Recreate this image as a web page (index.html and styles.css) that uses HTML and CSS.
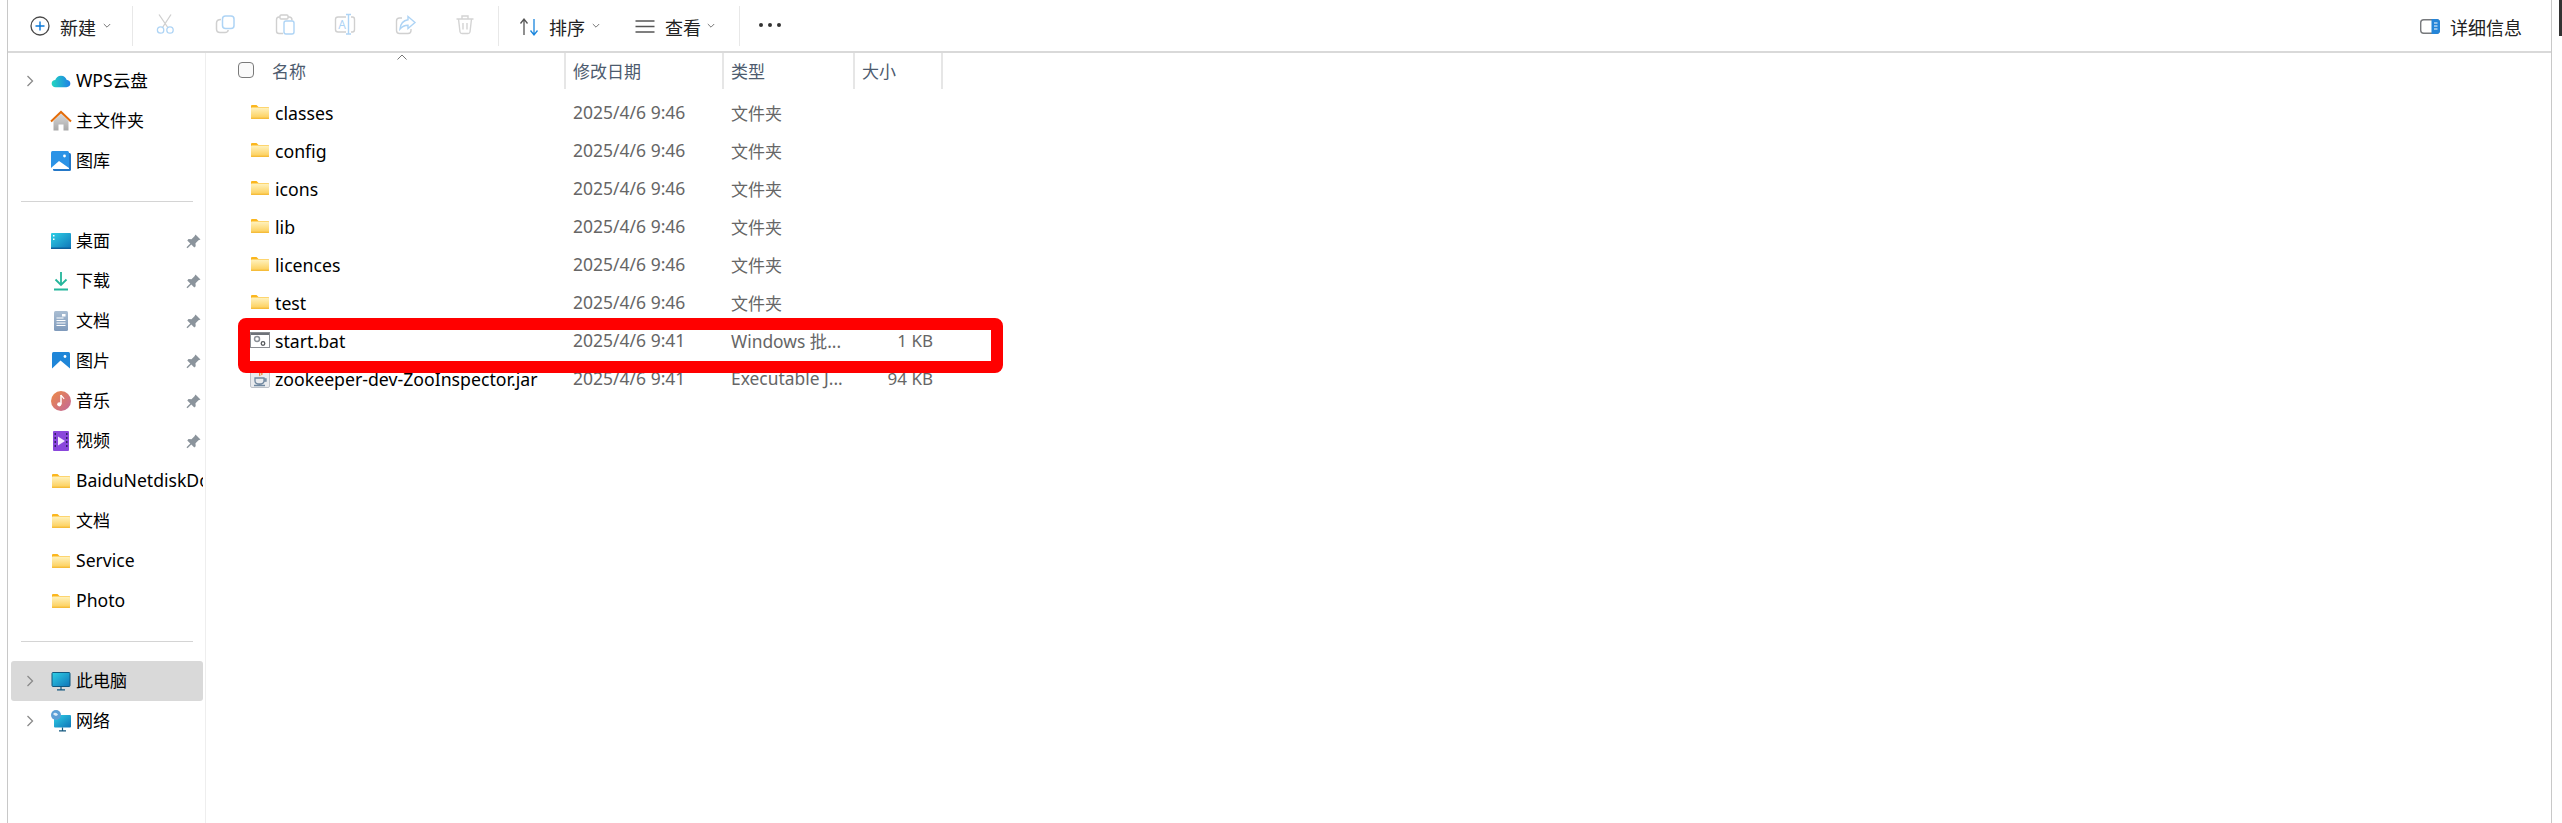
FILE: index.html
```html
<!DOCTYPE html>
<html lang="zh-CN">
<head>
<meta charset="utf-8">
<title>文件资源管理器</title>
<link rel="stylesheet" href="styles.css">
</head>
<body>
<svg class="defs" width="0" height="0" aria-hidden="true">
  <defs>
    <linearGradient id="fg" x1="0" y1="0" x2="0" y2="1"><stop offset="0" stop-color="#fff3c0"/><stop offset=".8" stop-color="#fdd468"/><stop offset="1" stop-color="#f3b62e"/></linearGradient>
    <linearGradient id="cloud" x1="0" y1="0" x2="1" y2="0"><stop offset="0" stop-color="#22d6c0"/><stop offset="1" stop-color="#1f7fe6"/></linearGradient>
    <linearGradient id="blue" x1="0" y1="0" x2="0" y2="1"><stop offset="0" stop-color="#2f9be6"/><stop offset="1" stop-color="#0f62b8"/></linearGradient>
    <linearGradient id="teal" x1="0" y1="0" x2="1" y2="1"><stop offset="0" stop-color="#2fd0e6"/><stop offset="1" stop-color="#0f74b8"/></linearGradient>
    <linearGradient id="doc" x1="0" y1="0" x2="0" y2="1"><stop offset="0" stop-color="#a9bdd2"/><stop offset="1" stop-color="#7f9abb"/></linearGradient>
    <linearGradient id="music" x1="0" y1="0" x2="1" y2="1"><stop offset="0" stop-color="#ee8a46"/><stop offset="1" stop-color="#c2679b"/></linearGradient>
    <linearGradient id="roof" x1="0" y1="0" x2="0" y2="1"><stop offset="0" stop-color="#d9d9d9"/><stop offset="1" stop-color="#a8a8a8"/></linearGradient>
    <symbol id="folder" viewBox="0 0 18 14"><path d="M0 1a1 1 0 0 1 1-1h4.500l2 2H17a1 1 0 0 1 1 1v10a1 1 0 0 1-1 1H1a1 1 0 0 1-1-1z" fill="#fbb61d"/><rect y="2.500" width="18" height="11.500" rx=".8" fill="url(#fg)"/></symbol>
    <symbol id="pin" viewBox="0 0 20 20"><path d="M11.500 3.500l5 5-2 .8-3 3 .2 3-1.400 1.200-3-3-3.800 3.800-1-1 3.800-3.800-3-3 1.200-1.400 3 .2 3-3z" fill="#8b949c"/></symbol>
    <symbol id="chev" viewBox="0 0 8 12"><path d="M1.500 1l5 5-5 5" fill="none" stroke="#8a8a8a" stroke-width="1.300"/></symbol>
    <symbol id="down" viewBox="0 0 8 6"><path d="M.8 1l3.200 3.200L7.200 1" fill="none" stroke="#777" stroke-width="1"/></symbol>
  </defs>
</svg>
<span class="edge"></span>
<div class="window">
  <header class="toolbar">
    <svg class="ticon new-icon" viewBox="0 0 24 24"><circle cx="12" cy="12" r="9" fill="none" stroke="#4a4a4a" stroke-width="1.300"/><path d="M12 7.500v9M7.500 12h9" stroke="#0a78d7" stroke-width="1.400"/></svg>
    <span class="tlabel">新建</span>
    <svg class="tdown" viewBox="0 0 8 6"><use href="#down"/></svg>
    <span class="tsep sep-new"></span>
    <div class="tgroup">
      <span class="tbtn"><svg class="ticon" viewBox="0 0 24 24" fill="none" stroke-width="1.300"><path d="M9.500 14.500L18 1.500M14.800 14.500L6 1.500" stroke="#cfcfcf"/><circle cx="7.600" cy="17" r="3.200" stroke="#aed4f5"/><circle cx="17" cy="17" r="3.200" stroke="#aed4f5"/></svg></span>
      <span class="tbtn"><svg class="ticon" viewBox="0 0 24 24" fill="none" stroke-width="1.500"><path d="M8 6.500C5 6.500 3.500 8 3.500 10v6c0 2.500 1.500 3.500 3.500 3.500h5c2 0 3-1 3.200-2.500" stroke="#d0d0d0"/><rect x="9.500" y="3" width="11.500" height="12.500" rx="3" stroke="#aed4f5"/></svg></span>
      <span class="tbtn"><svg class="ticon" viewBox="0 0 24 24" fill="none" stroke-width="1.400"><path d="M7 4H6C4.500 4 3.500 5 3.500 7v11c0 1.500 1 2.500 2.500 2.500h4M15 4h1c1.500 0 3 1 3 3v.5" stroke="#d0d0d0"/><rect x="7" y="2" width="8" height="4" rx="1" stroke="#d0d0d0"/><rect x="11" y="8" width="10" height="13" rx="2" stroke="#aed4f5"/></svg></span>
      <span class="tbtn"><svg class="ticon" viewBox="0 0 24 24" fill="none" stroke-width="1.400"><path d="M13 4H5C3.500 4 2.500 5 2.500 6.500v10C2.500 18 3.500 19 5 19h8M18 4h1.500c1.200 0 2 1 2 2.500v10c0 1.500-.8 2.500-2 2.500H18" stroke="#d0d0d0"/><path d="M15.500 1.500v19.500M13 1.500h5M13 21h5" stroke="#aed4f5"/><text class="rename-a" x="9" y="16" text-anchor="middle">A</text></svg></span>
      <span class="tbtn"><svg class="ticon" viewBox="0 0 24 24" fill="none" stroke-width="1.400"><path d="M9 5H6.500C4.500 5 3.500 6 3.500 8v9.500c0 2 1 3 3 3H15c2 0 3-1 3-3V16" stroke="#d0d0d0"/><path d="M15 3.500l7 6-7 6v-3.300c-3.500 0-6 1.300-8 3.800.5-5 3.500-8.500 8-9.200z" stroke="#aed4f5"/></svg></span>
      <span class="tbtn"><svg class="ticon" viewBox="0 0 24 24" fill="none" stroke="#d4d4d4" stroke-width="1.400"><path d="M3.500 6h17M9 6V3h6v3M5.500 6L7 19c.2 1.200 1 1.500 2 1.500h6c1 0 1.800-.3 2-1.500l1.500-13M10 10v6.500M14 10v6.500"/></svg></span>
    </div>
    <span class="tsep sep-edit"></span>
    <svg class="ticon sort-icon" viewBox="0 0 24 24" fill="none" stroke-width="1.300"><path d="M7 20V4M3.500 8.500L7 4l3.500 4.500" stroke="#555"/><path d="M17 4v16M13.500 15.500L17 20l3.500-4.500" stroke="#1a86dd"/></svg>
    <span class="tlabel">排序</span>
    <svg class="tdown" viewBox="0 0 8 6"><use href="#down"/></svg>
    <svg class="ticon list-icon" viewBox="0 0 24 24" stroke="#555" stroke-width="1.500"><path d="M2.500 6h19M2.500 11.500h19M2.500 17h19"/></svg>
    <span class="tlabel">查看</span>
    <svg class="tdown last-down" viewBox="0 0 8 6"><use href="#down"/></svg>
    <span class="tsep sep-view"></span>
    <svg class="ticon more-icon" viewBox="0 0 24 24" fill="#333"><circle cx="3" cy="11" r="2"/><circle cx="12" cy="11" r="2"/><circle cx="21" cy="11" r="2"/></svg>
    <div class="details">
      <svg class="ticon" viewBox="0 0 24 24"><rect x="2.700" y="5.700" width="18.600" height="13.600" rx="3" fill="#fff" stroke="#77797c" stroke-width="1.400"/><path d="M13.500 5h5c2.500 0 3.500 1.500 3.500 3.500v8c0 2-1 3.500-3.500 3.500h-5z" fill="#2585d8"/><path d="M16 9h3.500M16 12h3.500M16 15h3.500" stroke="#fff" stroke-width="1"/></svg>
      <span class="tlabel">详细信息</span>
    </div>
  </header>

  <div class="body">
    <nav class="sidebar">
      <div class="navrow"><svg class="chev" viewBox="0 0 8 12"><use href="#chev"/></svg><svg class="nicon" viewBox="-1.500 -1.500 27 27"><path d="M6 19c-3 0-4.500-2-4.500-4.200S3.300 11 5.500 11c.8-3 3.300-5 6.500-5 3.500 0 5.500 2 6.300 4.700 2.500.2 4.200 2 4.200 4.200S21 19 18 19z" fill="url(#cloud)"/></svg><span class="nlabel latin">WPS云盘</span></div>
      <div class="navrow"><span class="chev"></span><svg class="nicon" viewBox="0 0 24 24"><path d="M4.500 12L12 4.500 19.500 12v9.500h-5v-6h-5v6h-5z" fill="url(#roof)"/><path d="M2 12.500L12 3l10 9.500" fill="none" stroke="#e36c0a" stroke-width="2"/></svg><span class="nlabel">主文件夹</span></div>
      <div class="navrow"><span class="chev"></span><svg class="nicon" viewBox="0 0 24 24"><rect x="4" y="4" width="18" height="18" rx="1.500" fill="#2478c8"/><rect x="2" y="2" width="18" height="18" rx="1.500" fill="#2c93e6"/><path d="M2 19l8-7 10 7v1H2z" fill="#fff"/><circle cx="15.500" cy="7" r="1.400" fill="#fff"/></svg><span class="nlabel">图库</span></div>
      <div class="navsep"></div>
      <div class="navrow"><span class="chev"></span><svg class="nicon" viewBox="0 0 24 24"><rect x="2" y="4" width="20" height="16" rx="1" fill="url(#teal)"/><rect x="4" y="6" width="1.500" height="1.500" fill="#fff"/><rect x="4" y="9.500" width="1.500" height="1.500" fill="#fff"/><path d="M2 18.500h20V20H2z" fill="#0d5f9b"/></svg><span class="nlabel">桌面</span><svg class="pin" viewBox="0 0 20 20"><use href="#pin"/></svg></div>
      <div class="navrow"><span class="chev"></span><svg class="nicon" viewBox="0 0 24 24" fill="none" stroke="#23b59b" stroke-width="1.800"><path d="M12 3v13M6.500 10.500L12 16l5.500-5.500M5 20.500h14"/></svg><span class="nlabel">下载</span><svg class="pin" viewBox="0 0 20 20"><use href="#pin"/></svg></div>
      <div class="navrow"><span class="chev"></span><svg class="nicon" viewBox="0 0 24 24"><rect x="5" y="2" width="14" height="20" rx="1.500" fill="url(#doc)"/><path d="M7.500 9h7M7.500 11.500h9M7.500 14h9M7.500 16.500h9" stroke="#fff" stroke-width="1"/><rect x="13" y="5" width="3.500" height="2.500" fill="#fff"/></svg><span class="nlabel">文档</span><svg class="pin" viewBox="0 0 20 20"><use href="#pin"/></svg></div>
      <div class="navrow"><span class="chev"></span><svg class="nicon" viewBox="0 0 24 24"><rect x="3" y="3" width="18" height="18" rx="1.500" fill="#1f86d8"/><path d="M3 19.500l8.500-8 9.500 8V21H3z" fill="#fff"/><circle cx="16" cy="7.500" r="1.400" fill="#fff"/></svg><span class="nlabel">图片</span><svg class="pin" viewBox="0 0 20 20"><use href="#pin"/></svg></div>
      <div class="navrow"><span class="chev"></span><svg class="nicon" viewBox="0 0 24 24"><circle cx="12" cy="12" r="10" fill="url(#music)"/><path d="M12 6v9" stroke="#fff" stroke-width="1.500"/><path d="M12 6c.5 2 2.500 2 3 4" fill="none" stroke="#fff" stroke-width="1.200"/><circle cx="10.300" cy="15.300" r="2.100" fill="#fff"/></svg><span class="nlabel">音乐</span><svg class="pin" viewBox="0 0 20 20"><use href="#pin"/></svg></div>
      <div class="navrow"><span class="chev"></span><svg class="nicon" viewBox="0 0 24 24"><rect x="4" y="2" width="16" height="20" rx="1" fill="#8a47dc"/><path d="M5.500 4h1.500v2H5.500zM5.500 8h1.500v2H5.500zM5.500 12h1.500v2H5.500zM5.500 16h1.500v2H5.500zM17 4h1.500v2H17zM17 8h1.500v2H17zM17 12h1.500v2H17zM17 16h1.500v2H17z" fill="#34206b"/><path d="M9 7.500l7 4.500-7 4.500z" fill="#f3eaff"/></svg><span class="nlabel">视频</span><svg class="pin" viewBox="0 0 20 20"><use href="#pin"/></svg></div>
      <div class="navrow"><span class="chev"></span><span class="nicon folder-box"><svg class="folder" viewBox="0 0 18 14"><use href="#folder"/></svg></span><span class="nlabel latin">BaiduNetdiskDownload</span></div>
      <div class="navrow"><span class="chev"></span><span class="nicon folder-box"><svg class="folder" viewBox="0 0 18 14"><use href="#folder"/></svg></span><span class="nlabel">文档</span></div>
      <div class="navrow"><span class="chev"></span><span class="nicon folder-box"><svg class="folder" viewBox="0 0 18 14"><use href="#folder"/></svg></span><span class="nlabel latin">Service</span></div>
      <div class="navrow"><span class="chev"></span><span class="nicon folder-box"><svg class="folder" viewBox="0 0 18 14"><use href="#folder"/></svg></span><span class="nlabel latin">Photo</span></div>
      <div class="navsep"></div>
      <div class="navrow selected"><svg class="chev" viewBox="0 0 8 12"><use href="#chev"/></svg><svg class="nicon" viewBox="0 0 24 24"><rect x="3" y="3.500" width="18" height="14" rx="1" fill="url(#teal)" stroke="#11577f" stroke-width="1"/><path d="M12 18v2.500M8 20.800h8" stroke="#11577f" stroke-width="1.200"/></svg><span class="nlabel">此电脑</span></div>
      <div class="navrow"><svg class="chev" viewBox="0 0 8 12"><use href="#chev"/></svg><svg class="nicon" viewBox="0 0 24 24"><rect x="5" y="6" width="17" height="12.500" rx="1" fill="url(#teal)"/><path d="M13.500 18.500v3M10 21.800h7" stroke="#11577f" stroke-width="1.200"/><circle cx="7" cy="6" r="5" fill="#5d9fd6"/><path d="M4 5c2-2.500 4-1 5 .5-1 1.500-3 2-5-.5z" fill="#dcebf7"/></svg><span class="nlabel">网络</span></div>
    </nav>

    <main class="main">
      <div class="grid head">
        <div class="hcell name-head"><span class="check"></span><span class="hname">名称</span></div>
        <div class="hcell">修改日期</div>
        <div class="hcell">类型</div>
        <div class="hcell">大小</div>
      </div>
      <svg class="sort-caret" viewBox="0 0 10 6"><path d="M.5 5.500L5 1l4.500 4.500" fill="none" stroke="#777" stroke-width="1"/></svg>

      <div class="files">
        <div class="grid row"><div class="name"><svg class="folder" viewBox="0 0 18 14"><use href="#folder"/></svg><span>classes</span></div><div class="meta date">2025/4/6 9:46</div><div class="meta">文件夹</div><div class="meta size"></div></div>
        <div class="grid row"><div class="name"><svg class="folder" viewBox="0 0 18 14"><use href="#folder"/></svg><span>config</span></div><div class="meta date">2025/4/6 9:46</div><div class="meta">文件夹</div><div class="meta size"></div></div>
        <div class="grid row"><div class="name"><svg class="folder" viewBox="0 0 18 14"><use href="#folder"/></svg><span>icons</span></div><div class="meta date">2025/4/6 9:46</div><div class="meta">文件夹</div><div class="meta size"></div></div>
        <div class="grid row"><div class="name"><svg class="folder" viewBox="0 0 18 14"><use href="#folder"/></svg><span>lib</span></div><div class="meta date">2025/4/6 9:46</div><div class="meta">文件夹</div><div class="meta size"></div></div>
        <div class="grid row"><div class="name"><svg class="folder" viewBox="0 0 18 14"><use href="#folder"/></svg><span>licences</span></div><div class="meta date">2025/4/6 9:46</div><div class="meta">文件夹</div><div class="meta size"></div></div>
        <div class="grid row"><div class="name"><svg class="folder" viewBox="0 0 18 14"><use href="#folder"/></svg><span>test</span></div><div class="meta date">2025/4/6 9:46</div><div class="meta">文件夹</div><div class="meta size"></div></div>
        <div class="grid row"><div class="name"><svg class="ficon" viewBox="0 0 20 20"><rect x=".5" y="2.500" width="19" height="15" fill="#fff" stroke="#8a8d92"/><rect x="1" y="3" width="18" height="2" fill="#6e7278"/><circle cx="7" cy="9" r="2.500" fill="none" stroke="#8b9097" stroke-width="1.500"/><circle cx="13" cy="13.500" r="1.800" fill="none" stroke="#55585c" stroke-width="1.300"/></svg><span>start.bat</span></div><div class="meta date">2025/4/6 9:41</div><div class="meta latin">Windows 批...</div><div class="meta size">1 KB</div></div>
        <div class="grid row"><div class="name"><svg class="ficon" viewBox="0 0 20 20"><rect x=".5" y=".5" width="19" height="19" rx="1.500" fill="#e9ebee" stroke="#bcc1c8"/><path d="M10 2c2 2-2 3 0 6M12 3c1 2-1 2 0 4" fill="none" stroke="#e67824" stroke-width="1.200"/><path d="M5 10h9v3c0 2-2 3-4.500 3S5 15 5 13zM14 11h2v2h-2M4 17.500h11" fill="none" stroke="#6f879f" stroke-width="1.300"/></svg><span>zookeeper-dev-ZooInspector.jar</span></div><div class="meta date">2025/4/6 9:41</div><div class="meta latin">Executable J...</div><div class="meta size">94 KB</div></div>
      </div>
      <div class="callout"></div>
    </main>
  </div>
</div>
</body>
</html>
```

FILE: styles.css
```css
* { box-sizing: border-box; }
html, body { margin: 0; padding: 0; height: 823px; overflow: hidden; background: #fff; }
body {
  font-family: "Noto Sans", "Noto Sans CJK SC", sans-serif;
  font-size: 17px;
  color: #000;
  position: relative;
}
.defs { position: absolute; }
.edge { position: absolute; top: 0; right: 0; width: 3px; height: 36px; background: #333; }
.window {
  margin-left: 7px;
  width: 2545px;
  height: 823px;
  border-left: 1px solid #c8c8c8;
  border-right: 1px solid #c8c8c8;
  display: flex;
  flex-direction: column;
}

/* toolbar */
.toolbar {
  height: 53px;
  flex: none;
  border-bottom: 2px solid #d9d9d9;
  display: flex;
  align-items: center;
}
.ticon { width: 24px; height: 24px; flex: none; display: block; }
.tlabel {
  font-family: "Noto Sans CJK SC", sans-serif;
  font-size: 18px;
  line-height: 24px;
  color: #222;
  margin-left: 8px;
  margin-top: 3px;
  white-space: nowrap;
}
.tdown { width: 8px; height: 6px; margin-left: 7px; flex: none; }
.tsep { width: 1px; height: 40px; background: #e8e8e8; flex: none; }
.new-icon { margin-left: 20px; }
.sep-new { margin-left: 21px; }
.tgroup { display: flex; margin-left: 2px; }
.tbtn { width: 60px; display: flex; justify-content: center; margin-top: -2px; }
.sep-edit { margin-left: 3px; }
.sort-icon { margin-left: 18px; margin-top: 3px; }
.list-icon { margin-left: 33px; margin-top: 3px; }
.last-down { margin-left: 6px; }
.sep-view { margin-left: 24px; }
.more-icon { margin-left: 18px; }
.rename-a { font-family: "Noto Sans", sans-serif; font-size: 12px; fill: #aed4f5; stroke: none; }
.details { margin-left: auto; padding-right: 29px; display: flex; align-items: center; }

/* body */
.body { flex: 1; display: flex; min-height: 0; }

/* sidebar */
.sidebar {
  width: 198px;
  flex: none;
  border-right: 1px solid #eeeeee;
  padding-top: 8px;
}
.navrow {
  width: 192px;
  height: 40px;
  margin-left: 3px;
  padding-left: 15px;
  display: flex;
  align-items: center;
  border-radius: 3px;
}
.selected { background: #d9d9d9; }
.chev { width: 8px; height: 12px; flex: none; display: block; }
.nicon { width: 24px; height: 24px; margin-left: 15px; flex: none; display: flex; align-items: center; justify-content: center; }
.nlabel { margin-left: 3px; margin-bottom: 3px; flex: 1; min-width: 0; overflow: hidden; white-space: nowrap; }
.nlabel.latin { font-size: 17.6px; }
.pin { width: 20px; height: 20px; flex: none; margin-right: -1px; }
.navsep { width: 172px; height: 1px; margin: 20px 0 19px 13px; background: #d4d4d4; }
.folder { width: 18px; height: 14px; flex: none; display: block; }

/* file list */
.main { flex: 1; position: relative; min-width: 0; }
.grid { display: grid; grid-template-columns: 360px 158px 131px 88px; }
.head { height: 36px; }
.hcell {
  display: flex;
  align-items: center;
  padding-left: 7px;
  padding-bottom: 2px;
  border-right: 2px solid #e6e6e6;
  color: #4d5b6e;
}
.name-head { padding-left: 32px; }
.check { width: 16px; height: 16px; border: 1.500px solid #7a7a7a; border-radius: 4px; background: #fafafa; }
.hname { margin-left: 18px; }
.sort-caret { position: absolute; left: 191px; top: 1px; width: 10px; height: 6px; }
.files { padding-top: 5px; }
.row { height: 38px; align-items: center; padding-bottom: 2px; }
.name { display: flex; align-items: center; padding-left: 45px; white-space: nowrap; font-size: 17.7px; }
.name span { margin-left: 6px; margin-top: 2px; }
.ficon { width: 20px; height: 20px; margin-left: -1px; margin-right: -1px; flex: none; }
.meta { padding-left: 7px; color: #666; white-space: nowrap; }
.date { font-size: 17.5px; }
.meta.latin { font-size: 17.4px; }
.size { padding: 0 10px 0 0; text-align: right; }
.callout {
  position: absolute;
  left: 32px;
  top: 265px;
  width: 765px;
  height: 55px;
  border: 12px solid #ff0000;
  border-radius: 8px;
  pointer-events: none;
}
```
